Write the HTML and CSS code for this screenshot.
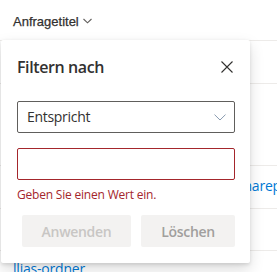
FILE: index.html
```html
<!DOCTYPE html>
<html lang="de">
<head>
<meta charset="utf-8">
<link rel="stylesheet" href="styles.css">
</head>
<body>
<div class="list">
  <div class="header">
    <span class="col-title">Anfragetitel</span>
    <svg class="hchev" width="9" height="6" viewBox="0 0 9 6"><path d="M0.5 1 L4.5 4.8 L8.5 1" fill="none" stroke="#605e5c" stroke-width="1.1"/></svg>
  </div>
  <div class="row r1"></div>
  <div class="row r2"></div>
  <div class="row r3"><span class="link link-right">sharepoint</span></div>
  <div class="row r4"></div>
  <div class="row r5"><span class="link">llias-ordner</span></div>
</div>

<div class="panel">
  <div class="panel-head">
    <h2 class="panel-title">Filtern nach</h2>
    <svg class="close" width="12" height="12" viewBox="0 0 12 12"><path d="M0.5 0.5 L11.5 11.5 M11.5 0.5 L0.5 11.5" stroke="#323130" stroke-width="1.1" fill="none"/></svg>
  </div>
  <div class="dropdown">
    <span>Entspricht</span>
    <svg class="dchev" width="12" height="7" viewBox="0 0 12 7"><path d="M0.5 0.6 L6 6 L11.5 0.6" fill="none" stroke="#8a9bb0" stroke-width="1"/></svg>
  </div>
  <div class="textfield"></div>
  <div class="error">Geben Sie einen Wert ein.</div>
  <div class="buttons">
    <button class="btn apply" disabled>Anwenden</button>
    <button class="btn clear">Löschen</button>
  </div>
</div>
</body>
</html>
```

FILE: styles.css
```css
html, body {
  margin: 0;
  padding: 0;
  background: #ffffff;
  font-family: "Open Sans", "Noto Sans", "Liberation Sans", sans-serif;
  color: #323130;
  overflow: hidden;
}
.list {
  width: 277px;
}
.header {
  height: 40px;
  display: flex;
  align-items: center;
  padding-left: 13px;
  box-sizing: border-box;
  gap: 4px;
}
.col-title {
  font-family: "Liberation Sans", "Open Sans", sans-serif;
  font-size: 13px;
  color: #323130;
  margin-top: 3px;
  -webkit-text-stroke: 0.25px #323130;
}
.hchev {
  margin-top: 2px;
}
.row {
  border-top: 1px solid #edebe9;
  box-sizing: border-box;
  position: relative;
}
.r1 { height: 43px; }
.r2 { height: 82px; }
.r3 { height: 43px; }
.r4 { height: 42px; }
.r5 { height: 40px; }
.link {
  color: #0078d4;
  font-size: 14px;
  letter-spacing: -0.2px;
}
.r3 .link-right {
  position: absolute;
  left: 237px;
  top: 10px;
}
.r5 .link {
  position: absolute;
  left: 13px;
  top: 8px;
}
.panel {
  position: absolute;
  left: 1px;
  top: 40px;
  width: 249px;
  height: 223px;
  background: #ffffff;
  box-shadow: 0 6.4px 14.4px rgba(0,0,0,0.132), 0 1.2px 3.6px rgba(0,0,0,0.108);
  border-radius: 2px;
  padding: 0 15px 0 16px;
  box-sizing: border-box;
}
.panel-head {
  display: flex;
  align-items: center;
  justify-content: space-between;
  height: 54px;
  padding-right: 2px;
}
.panel-title {
  margin: 0;
  font-size: 16px;
  font-weight: 600;
  letter-spacing: -0.4px;
  margin-top: 0px;
  color: #323130;
}
.close {
  margin-top: -1px;
}
.dropdown {
  margin-top: 7px;
  height: 32px;
  border: 1px solid #605e5c;
  border-radius: 2px;
  box-sizing: border-box;
  display: flex;
  align-items: center;
  justify-content: space-between;
  padding: 0 8px 0 9px;
  font-size: 14px;
  letter-spacing: -0.3px;
}
.dropdown span {
  margin-top: -1px;
}
.textfield {
  margin-top: 15px;
  height: 32px;
  border: 1px solid #a4262c;
  border-radius: 2px;
  box-sizing: border-box;
}
.error {
  color: #a4262c;
  font-size: 12px;
  margin-top: 7px;
  line-height: 16px;
  letter-spacing: -0.2px;
}
.buttons {
  display: flex;
  justify-content: flex-end;
  gap: 10px;
  margin-top: 12px;
}
.btn {
  height: 32px;
  border: none;
  border-radius: 2px;
  background: #f3f2f1;
  font-family: inherit;
  font-size: 14px;
  font-weight: 600;
  letter-spacing: -0.3px;
  padding: 0;
}
.apply {
  width: 109px;
  color: #c8c6c4;
}
.clear {
  width: 94px;
  color: #a19f9d;
}
```
